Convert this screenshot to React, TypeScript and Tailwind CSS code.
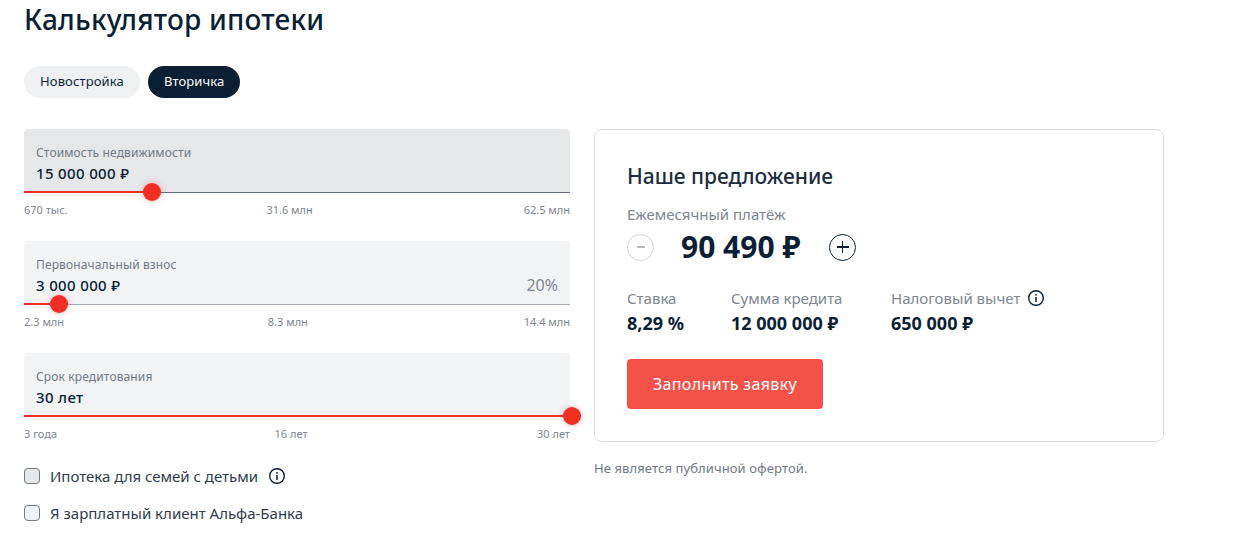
import React from 'react';

const InfoIcon = () => (
  <svg width="18" height="18" viewBox="0 0 18 18" fill="none" className="shrink-0">
    <circle cx="9" cy="9" r="7.3" stroke="#0b1f35" strokeWidth="1.4" />
    <rect x="8.25" y="8" width="1.5" height="5" fill="#0b1f35" />
    <rect x="8.25" y="5" width="1.5" height="1.6" fill="#0b1f35" />
  </svg>
);

type FieldProps = {
  label: string;
  value: string;
  percent?: string;
  fill: number;
  active?: boolean;
  lineColor: string;
  ticks: string[];
};

const Field: React.FC<FieldProps> = ({ label, value, percent, fill, active, lineColor, ticks }) => (
  <div>
    <div className={`relative h-[64px] rounded-t-[4px] pl-3 pr-3 pt-[16px] ${active ? 'bg-[#e6e7e9]' : 'bg-[#f2f3f5]'}`}>
      <div className="text-[12px] leading-[16px] tracking-[0.13px] text-[#6f7885]">{label}</div>
      <div className="mt-[2px] flex items-center justify-between">
        <span className="text-[15px] leading-[20px] font-medium tracking-[0.35px] text-[#0b1f35]">{value}</span>
        {percent && <span className="text-[16px] leading-[20px] text-[#7d8691]">{percent}</span>}
      </div>
      <div className={`absolute bottom-0 left-0 right-0 h-px ${lineColor}`} />
      <div className="absolute bottom-0 left-0 h-[2px] bg-[#f12e24]" style={{ width: fill }} />
      <div
        className="absolute bottom-[-8px] h-[18px] w-[18px] -translate-x-1/2 rounded-full bg-[#f12e24] shadow-[0_0_6px_rgba(241,46,36,0.35)]"
        style={{ left: fill }}
      />
    </div>
    <div className="mt-[10px] flex justify-between text-[11px] leading-[14px] text-[#7d8691]">
      <span>{ticks[0]}</span>
      <span className="mr-3">{ticks[1]}</span>
      <span>{ticks[2]}</span>
    </div>
  </div>
);

const Stat: React.FC<{ label: string; value: string; info?: boolean }> = ({ label, value, info }) => (
  <div>
    <div className="flex items-center gap-[7px] text-[15px] leading-[20px] text-[#7d8691]">
      {label}
      {info && <InfoIcon />}
    </div>
    <div className="mt-[4px] text-[18px] leading-[22px] font-bold text-[#0b1f35]">{value}</div>
  </div>
);

export default function App() {
  return (
    <div className="h-[544px] w-[1259px] overflow-hidden bg-white pl-6 font-['Noto_Sans',sans-serif] text-[#0b1f35]">
      <h1 className="pt-px text-[28px] leading-[36px] font-medium tracking-[0.2px] text-[#0b1f35]">Калькулятор ипотеки</h1>

      <div className="mt-[29px] flex gap-2">
        <button className="h-8 rounded-2xl bg-[#eff0f2] px-4 text-[13px] tracking-[0.13px] text-[#0b1f35]">Новостройка</button>
        <button className="h-8 rounded-2xl bg-[#0b1f35] px-4 text-[13px] tracking-[0.1px] text-white">Вторичка</button>
      </div>

      <div className="mt-[31px] flex gap-6">
        <div className="w-[546px]">
          <div className="flex flex-col gap-[24px]">
            <Field
              label="Стоимость недвижимости"
              value="15 000 000 ₽"
              fill={128}
              active
              lineColor="bg-[#5f6b7a]"
              ticks={['670 тыс.', '31.6 млн', '62.5 млн']}
            />
            <Field
              label="Первоначальный взнос"
              value="3 000 000 ₽"
              percent="20%"
              fill={35}
              lineColor="bg-[#a4abb4]"
              ticks={['2.3 млн', '8.3 млн', '14.4 млн']}
            />
            <Field
              label="Срок кредитования"
              value="30 лет"
              fill={548}
              lineColor="bg-[#a4abb4]"
              ticks={['3 года', '16 лет', '30 лет']}
            />
          </div>

          <div className="mt-[27px] flex flex-col gap-[21px]">
            <label className="flex h-4 items-center text-[15px] text-[#2e3c4d]">
              <span className="mr-[10px] h-4 w-4 rounded-[4px] border border-[#6f7885] bg-[#e6e7e9]" />
              Ипотека для семей с детьми
              <span className="ml-[10px]">
                <InfoIcon />
              </span>
            </label>
            <label className="flex h-4 items-center text-[15px] text-[#2e3c4d]">
              <span className="mr-[10px] h-4 w-4 rounded-[4px] border border-[#6f7885] bg-[#f2f3f5]" />
              Я зарплатный клиент Альфа-Банка
            </label>
          </div>
        </div>

        <div className="w-[570px]">
          <div className="h-[313px] rounded-[8px] border border-[#dcdfe2] px-8 pt-[31px]">
            <h2 className="text-[21px] leading-[30px] font-medium text-[#1c2c3e]">Наше предложение</h2>
            <div className="mt-[13px] text-[15px] leading-[20px] text-[#7d8691]">Ежемесячный платёж</div>
            <div className="mt-[4px] flex items-center">
              <span className="flex h-[27px] w-[27px] items-center justify-center rounded-full border border-[#d0d3d8]">
                <span className="h-[1.5px] w-[8px] bg-[#b4b9c0]" />
              </span>
              <span className="ml-[27px] w-[148px] text-[30px] leading-[38px] font-bold text-[#0b1f35]">90 490 ₽</span>
              <span className="relative flex h-[27px] w-[27px] items-center justify-center rounded-full border border-[#0b1f35]">
                <span className="h-[1.5px] w-[12px] bg-[#0b1f35]" />
                <span className="absolute h-[12px] w-[1.5px] bg-[#0b1f35]" />
              </span>
            </div>
            <div className="mt-[22px] flex">
              <div className="w-[104px]">
                <Stat label="Ставка" value="8,29 %" />
              </div>
              <div className="w-[160px]">
                <Stat label="Сумма кредита" value="12 000 000 ₽" />
              </div>
              <Stat label="Налоговый вычет" value="650 000 ₽" info />
            </div>
            <button className="mt-[25px] h-[50px] w-[196px] rounded-[4px] bg-[#f45248] text-[16px] tracking-[0.35px] text-white">
              Заполнить заявку
            </button>
          </div>
          <p className="mt-[18px] text-[13px] leading-[16px] tracking-[0.1px] text-[#6f7885]">Не является публичной офертой.</p>
        </div>
      </div>
    </div>
  );
}
